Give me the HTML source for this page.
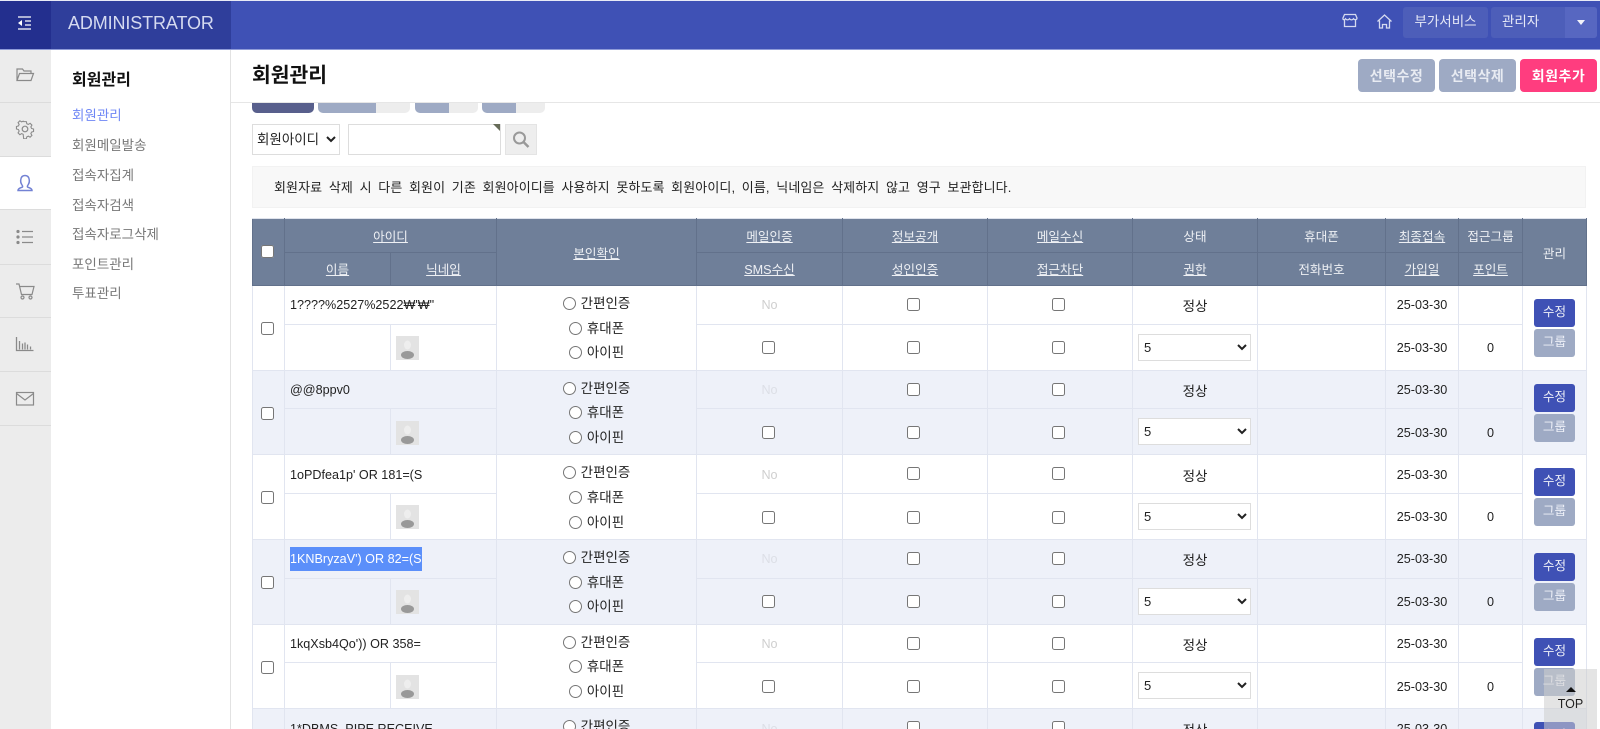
<!DOCTYPE html>
<html lang="ko"><head><meta charset="utf-8"><title>회원관리</title>
<style>
*{box-sizing:border-box}
html,body{margin:0;padding:0;width:1600px;height:729px;overflow:hidden;background:#fff}
body{font-family:"Liberation Sans","Noto Sans CJK KR",sans-serif;font-size:13px;color:#222;position:relative}
.a{position:absolute}
a{color:inherit}
.head{left:0;top:0;width:1600px;height:50px;background:#3f51b5;border-top:1px solid #e8eaf6;border-bottom:1px solid #8f9bd8}
.hr{left:0;top:1px;width:51px;height:48px;background:#232f8e}
.hl{left:51px;top:1px;width:180px;height:48px;background:#2f3e9b;color:#d5daf0;font-size:18px;line-height:44px;padding-left:17px;letter-spacing:-.12px}
.hb{top:7px;height:31px;background:#4d5eb9;color:#e6e9f7;line-height:30px;text-align:center;border-radius:3px;font-size:13.5px}
.rail{left:0;top:50px;width:51px;height:679px;background:#ececec}
.ri{left:0;width:51px;height:54px;border-bottom:1px solid #dcdcdc}
.ri svg{position:absolute;left:15px;top:15px}
.side{left:51px;top:50px;width:180px;height:679px;background:#fff;border-right:1px solid #e2e2e2}
.side b{position:absolute;left:21px;top:19px;font-size:16px;color:#111;line-height:24px}
.side span{position:absolute;left:21px;font-size:13.5px;line-height:20px;color:#777}
.title{left:252px;top:61px;font-size:20.4px;font-weight:bold;line-height:30px;color:#111}
.tb{top:59px;height:33px;width:77px;background:#9eaac4;color:#e8ebf2;font-weight:bold;font-size:14px;line-height:34px;text-align:center;border-radius:4px;letter-spacing:.5px}
.line{left:231px;top:102px;width:1369px;height:1px;background:#e6e6e6}
.tab{top:103px;height:10px;border-radius:0 0 5px 5px;background:#ededed;overflow:hidden}
.tab i{position:absolute;left:0;top:0;height:10px;background:#9eaac4}
select{font-family:inherit;font-size:13px;color:#222;background-color:#fff;border:1px solid #ddd;border-radius:0;margin:0}
.notice{left:252px;top:166px;width:1334px;height:42px;background:#f8f8f8;border:1px solid #f2f2f2;line-height:42px;padding-left:21px;font-size:13px;letter-spacing:.1px;word-spacing:2.9px}
.clip{left:0;top:0;width:1600px;height:729px;overflow:hidden}
table{position:absolute;left:252px;top:218px;width:1334px;border-collapse:collapse;table-layout:fixed;font-size:12.6px}
th,td{padding:0;text-align:center;border:1px solid #e1e5f0;vertical-align:middle}
th{background:#6f7f99;color:#eef0f4;font-weight:normal;border-color:#62718b;height:33.5px}
th a{text-decoration:underline}
th input{position:relative;left:-1px;top:-1px}
thead tr:first-child th{border-top-color:#dfe3ec}
td.l{text-align:left;padding-left:5px;white-space:nowrap;overflow:hidden;font-size:12.6px}
tr.e td{background:#eef1f9}
tr.t td{height:38.5px}
tr.u td{height:46.2px}
tr.t td:not([rowspan]){padding-top:1px}
tr.u td{padding-top:2px}
tr.t td:nth-child(7){font-size:13.5px}
td input[type=checkbox],th input{width:13px;height:13px;margin:0;vertical-align:middle}
td input[type=checkbox]{position:relative;left:-1.5px}
tr.t td:not([rowspan]) input[type=checkbox]{top:-1.5px}
tr.u td input[type=checkbox]{top:-1px}
td.r{line-height:24.6px;font-size:13.5px;padding-top:2px}
.r input{margin:0 5px 0 0;width:13px;height:13px;vertical-align:-2px}
.no{color:#cfcfcf}
tr.e .no{color:#dcdfe6}
.av{display:block;width:23px;height:24px;margin-left:5px;background:#e3e3e3}
.sel{width:113px;height:27px;padding-left:1px;display:block;margin-left:5px;position:relative;top:-1px}
.b{display:block;width:41px;height:28px;margin:0 auto;border-radius:3px;color:#eef0f8;line-height:27px;background:#3f51b5}
.b.g{background:#9eaac4;margin-top:2px}
.sl{background:#5b8ffa;color:#fff;display:inline-block;line-height:24px;height:24px}
.top{left:1544px;top:669px;width:53px;height:60px;background:rgba(205,205,205,.55);color:#222;text-align:center;font-size:12.5px;line-height:20px;padding-top:25px}
.top:before{content:"";position:absolute;left:22px;top:18px;border:5px solid transparent;border-top:0;border-bottom:5px solid #111}
</style></head><body>

<div class="a head"></div>
<div class="a hr"><svg width="51" height="48"><g stroke="#fff" stroke-width="1.3" fill="none"><path d="M18 16H31M25 20H31M25 24H31M18 28H31"/></g><path d="M18 22l4-3v6z" fill="#fff"/></svg></div>
<div class="a hl">ADMINISTRATOR</div>
<svg class="a" style="left:1341px;top:12px" width="18" height="18" viewBox="0 0 18 18" fill="none" stroke="#d5daf0" stroke-width="1.3"><path d="M3.500 2.500h11l1.500 3.500c0 2-2.500 2.200-3.500.8-1 1.400-3 1.400-4 0-1 1.400-3 1.400-4 0C3.500 8.200 1.500 8 2 6zM3.500 8v6.500h11V8"/></svg>
<svg class="a" style="left:1376px;top:13px" width="17" height="17" viewBox="0 0 17 17" fill="none" stroke="#d5daf0" stroke-width="1.3"><path d="M1.500 8.500 8.500 2l7 6.500M3.500 7.500V15h3v-3.500h4V15h3V7.500"/></svg>
<div class="a hb" style="left:1403px;width:85px">부가서비스</div>
<div class="a hb" style="left:1491px;width:106px;text-align:left;padding-left:11px">관리자</div>
<div class="a" style="left:1565px;top:7px;width:32px;height:31px;background:#5767c1;border-radius:0 3px 3px 0"></div>
<div class="a" style="left:1577px;top:20px;border:4px solid transparent;border-top:5px solid #f2f3fa;border-bottom:0"></div>

<div class="a rail"></div>
<div class="a ri" style="top:49px;height:54px"><svg width="20" height="20" viewBox="0 0 20 20" fill="none" stroke="#8a8a8a" stroke-width="1.2" style="top:16px"><path d="M2 15.500V4h5.500l1.500 2h7v2.500M2 15.500 4.500 8.500H18.500L16 15.500z"/></svg></div>
<div class="a ri" style="top:103px;height:54px"><svg width="20" height="20" viewBox="0 0 20 20" fill="none" stroke="#8a8a8a" stroke-width="1.2" style="top:16px"><circle cx="10" cy="10" r="2.800"/><path d="M8.500 1.800h3l.5 2.300 1.700.8 2-1.200 2 2-1.200 2 .8 1.700 2.200.6v2.800l-2.200.6-.8 1.700 1.200 2-2 2-2-1.200-1.700.8-.5 2.200h-3L8 15.900l-1.700-.8-2 1.200-2-2 1.200-2-.8-1.700-2.200-.6V7.200l2.200-.6.8-1.700-1.200-2 2-2 2 1.200L8 1.300z" transform="translate(1 1) scale(.9)"/></svg></div>
<div class="a ri" style="top:157px;height:53px;background:#fff"><svg width="20" height="20" viewBox="0 0 20 20" fill="none" stroke="#7382d4" stroke-width="1.500" style="top:16px"><path d="M3 17.500h14c0-2.500-3-2.500-4.500-3.500-.5-.5 0-1.300.8-2.500 1-1.500 1.200-3 1-4.500C14 4 12.300 2.500 10 2.500S6 4 5.700 7c-.2 1.500 0 3 1 4.500.8 1.200 1.300 2 .8 2.500C6 15 3 15 3 17.500z"/></svg></div>
<div class="a ri" style="top:210px;height:55px"><svg width="20" height="20" viewBox="0 0 20 20" fill="none" stroke="#8a8a8a" stroke-width="1.200" style="top:17px"><path d="M7 4.500h11M7 10h11M7 15.500h11"/><g fill="#8a8a8a" stroke="none"><circle cx="3" cy="4.500" r="1.600"/><circle cx="3" cy="10" r="1.600"/><circle cx="3" cy="15.500" r="1.600"/></g></svg></div>
<div class="a ri" style="top:265px;height:53px"><svg width="20" height="20" viewBox="0 0 20 20" fill="none" stroke="#8a8a8a" stroke-width="1.200" style="top:16px"><path d="M1 3h3l2.500 10.500h10.500L19 5.500H5"/><circle cx="7.500" cy="16.500" r="1.500"/><circle cx="15.500" cy="16.500" r="1.500"/></svg></div>
<div class="a ri" style="top:318px;height:54px"><svg width="20" height="20" viewBox="0 0 20 20" fill="none" stroke="#8a8a8a" stroke-width="1.300" style="top:16px"><path d="M1.500 3v13.500h17M4.500 15.500V7M7.500 15.500V9.500M10 15.500V8.500M12.500 15.500V10.500M15.500 15.500v-3"/></svg></div>
<div class="a ri" style="top:372px;height:54px"><svg width="20" height="20" viewBox="0 0 20 20" fill="none" stroke="#8a8a8a" stroke-width="1.200" style="top:17px"><rect x="1.500" y="3.500" width="17" height="12.500"/><path d="M1.500 4.500 10 11l8.500-6.500"/></svg></div>

<div class="a side">
<b>회원관리</b>
<span style="top:56px;color:#6f87f5">회원관리</span>
<span style="top:86px">회원메일발송</span>
<span style="top:116px">접속자집계</span>
<span style="top:146px">접속자검색</span>
<span style="top:175px">접속자로그삭제</span>
<span style="top:205px">포인트관리</span>
<span style="top:234px">투표관리</span>
</div>

<div class="a title">회원관리</div>
<div class="a tb" style="left:1358px">선택수정</div>
<div class="a tb" style="left:1439px">선택삭제</div>
<div class="a tb" style="left:1520px;background:#ff3d7f;color:#fff">회원추가</div>
<div class="a line"></div>

<div class="a tab" style="left:252px;width:62px;background:#585f8c"></div>
<div class="a tab" style="left:318px;width:92px"><i style="width:58px"></i></div>
<div class="a tab" style="left:415px;width:63px"><i style="width:34px"></i></div>
<div class="a tab" style="left:482px;width:63px"><i style="width:34px"></i></div>

<select class="a" style="left:252px;top:124px;width:88px;height:31px;padding-left:0;font-size:13.5px"><option>회원아이디</option></select>
<div class="a" style="left:348px;top:124px;width:153px;height:31px;border:1px solid #ddd;background:#fff"></div>
<div class="a" style="left:493px;top:124px;border-top:7px solid #666b58;border-left:7px solid transparent"></div>
<div class="a" style="left:505px;top:124px;width:32px;height:31px;background:#eee;border:1px solid #e4e4e4"><svg width="30" height="29" viewBox="0 0 30 29" fill="none" stroke="#999" stroke-width="2"><circle cx="13.500" cy="13" r="5.500"/><path d="M17.500 17l5 5" stroke-width="2.500"/></svg></div>

<div class="a notice">회원자료 삭제 시 다른 회원이 기존 회원아이디를 사용하지 못하도록 회원아이디, 이름, 닉네임은 삭제하지 않고 영구 보관합니다.</div>

<div class="a clip">
<table>
<colgroup><col style="width:32px"><col style="width:106px"><col style="width:106px"><col style="width:200px"><col style="width:146px"><col style="width:145px"><col style="width:145px"><col style="width:125px"><col style="width:128px"><col style="width:73px"><col style="width:64px"><col style="width:64px"></colgroup>
<thead>
<tr><th rowspan="2"><input type="checkbox"></th><th colspan="2"><a>아이디</a></th><th rowspan="2"><a>본인확인</a></th><th><a>메일인증</a></th><th><a>정보공개</a></th><th><a>메일수신</a></th><th>상태</th><th>휴대폰</th><th><a>최종접속</a></th><th>접근그룹</th><th rowspan="2">관리</th></tr>
<tr><th><a>이름</a></th><th><a>닉네임</a></th><th><a>SMS수신</a></th><th><a>성인인증</a></th><th><a>접근차단</a></th><th><a>권한</a></th><th>전화번호</th><th><a>가입일</a></th><th><a>포인트</a></th></tr>
</thead>
<tbody>
<tr class="t"><td rowspan="2"><input type="checkbox"></td><td class="l" colspan="2">1????%2527%2522₩'₩"</td><td rowspan="2" class="r"><input type="radio">간편인증<br><input type="radio">휴대폰<br><input type="radio">아이핀</td><td class="no">No</td><td><input type="checkbox"></td><td><input type="checkbox"></td><td>정상</td><td></td><td>25-03-30</td><td></td><td rowspan="2"><span class="b">수정</span><span class="b g">그룹</span></td></tr>
<tr class="u"><td></td><td><span class="av"><svg width="23" height="24" viewBox="0 0 23 24"><ellipse cx="11.500" cy="9" rx="3.500" ry="4.500" fill="#eee"/><ellipse cx="11.500" cy="19" rx="6.500" ry="4" fill="#999"/></svg></span></td><td><input type="checkbox"></td><td><input type="checkbox"></td><td><input type="checkbox"></td><td><select class="sel"><option>5</option></select></td><td></td><td>25-03-30</td><td>0</td></tr>

<tr class="t e"><td rowspan="2"><input type="checkbox"></td><td class="l" colspan="2">@@8ppv0</td><td rowspan="2" class="r"><input type="radio">간편인증<br><input type="radio">휴대폰<br><input type="radio">아이핀</td><td class="no">No</td><td><input type="checkbox"></td><td><input type="checkbox"></td><td>정상</td><td></td><td>25-03-30</td><td></td><td rowspan="2"><span class="b">수정</span><span class="b g">그룹</span></td></tr>
<tr class="u e"><td></td><td><span class="av"><svg width="23" height="24" viewBox="0 0 23 24"><ellipse cx="11.500" cy="9" rx="3.500" ry="4.500" fill="#eee"/><ellipse cx="11.500" cy="19" rx="6.500" ry="4" fill="#999"/></svg></span></td><td><input type="checkbox"></td><td><input type="checkbox"></td><td><input type="checkbox"></td><td><select class="sel"><option>5</option></select></td><td></td><td>25-03-30</td><td>0</td></tr>

<tr class="t"><td rowspan="2"><input type="checkbox"></td><td class="l" colspan="2">1oPDfea1p' OR 181=(S</td><td rowspan="2" class="r"><input type="radio">간편인증<br><input type="radio">휴대폰<br><input type="radio">아이핀</td><td class="no">No</td><td><input type="checkbox"></td><td><input type="checkbox"></td><td>정상</td><td></td><td>25-03-30</td><td></td><td rowspan="2"><span class="b">수정</span><span class="b g">그룹</span></td></tr>
<tr class="u"><td></td><td><span class="av"><svg width="23" height="24" viewBox="0 0 23 24"><ellipse cx="11.500" cy="9" rx="3.500" ry="4.500" fill="#eee"/><ellipse cx="11.500" cy="19" rx="6.500" ry="4" fill="#999"/></svg></span></td><td><input type="checkbox"></td><td><input type="checkbox"></td><td><input type="checkbox"></td><td><select class="sel"><option>5</option></select></td><td></td><td>25-03-30</td><td>0</td></tr>

<tr class="t e"><td rowspan="2"><input type="checkbox"></td><td class="l" colspan="2"><span class="sl">1KNBryzaV') OR 82=(S</span></td><td rowspan="2" class="r"><input type="radio">간편인증<br><input type="radio">휴대폰<br><input type="radio">아이핀</td><td class="no">No</td><td><input type="checkbox"></td><td><input type="checkbox"></td><td>정상</td><td></td><td>25-03-30</td><td></td><td rowspan="2"><span class="b">수정</span><span class="b g">그룹</span></td></tr>
<tr class="u e"><td></td><td><span class="av"><svg width="23" height="24" viewBox="0 0 23 24"><ellipse cx="11.500" cy="9" rx="3.500" ry="4.500" fill="#eee"/><ellipse cx="11.500" cy="19" rx="6.500" ry="4" fill="#999"/></svg></span></td><td><input type="checkbox"></td><td><input type="checkbox"></td><td><input type="checkbox"></td><td><select class="sel"><option>5</option></select></td><td></td><td>25-03-30</td><td>0</td></tr>

<tr class="t"><td rowspan="2"><input type="checkbox"></td><td class="l" colspan="2">1kqXsb4Qo')) OR 358=</td><td rowspan="2" class="r"><input type="radio">간편인증<br><input type="radio">휴대폰<br><input type="radio">아이핀</td><td class="no">No</td><td><input type="checkbox"></td><td><input type="checkbox"></td><td>정상</td><td></td><td>25-03-30</td><td></td><td rowspan="2"><span class="b">수정</span><span class="b g">그룹</span></td></tr>
<tr class="u"><td></td><td><span class="av"><svg width="23" height="24" viewBox="0 0 23 24"><ellipse cx="11.500" cy="9" rx="3.500" ry="4.500" fill="#eee"/><ellipse cx="11.500" cy="19" rx="6.500" ry="4" fill="#999"/></svg></span></td><td><input type="checkbox"></td><td><input type="checkbox"></td><td><input type="checkbox"></td><td><select class="sel"><option>5</option></select></td><td></td><td>25-03-30</td><td>0</td></tr>

<tr class="t e"><td rowspan="2"><input type="checkbox"></td><td class="l" colspan="2">1*DBMS_PIPE.RECEIVE_</td><td rowspan="2" class="r"><input type="radio">간편인증<br><input type="radio">휴대폰<br><input type="radio">아이핀</td><td class="no">No</td><td><input type="checkbox"></td><td><input type="checkbox"></td><td>정상</td><td></td><td>25-03-30</td><td></td><td rowspan="2"><span class="b">수정</span><span class="b g">그룹</span></td></tr>
<tr class="u e"><td></td><td><span class="av"></span></td><td><input type="checkbox"></td><td><input type="checkbox"></td><td><input type="checkbox"></td><td><select class="sel"><option>5</option></select></td><td></td><td>25-03-30</td><td>0</td></tr>
</tbody>
</table>
</div>

<div class="a top">TOP</div>
</body></html>
